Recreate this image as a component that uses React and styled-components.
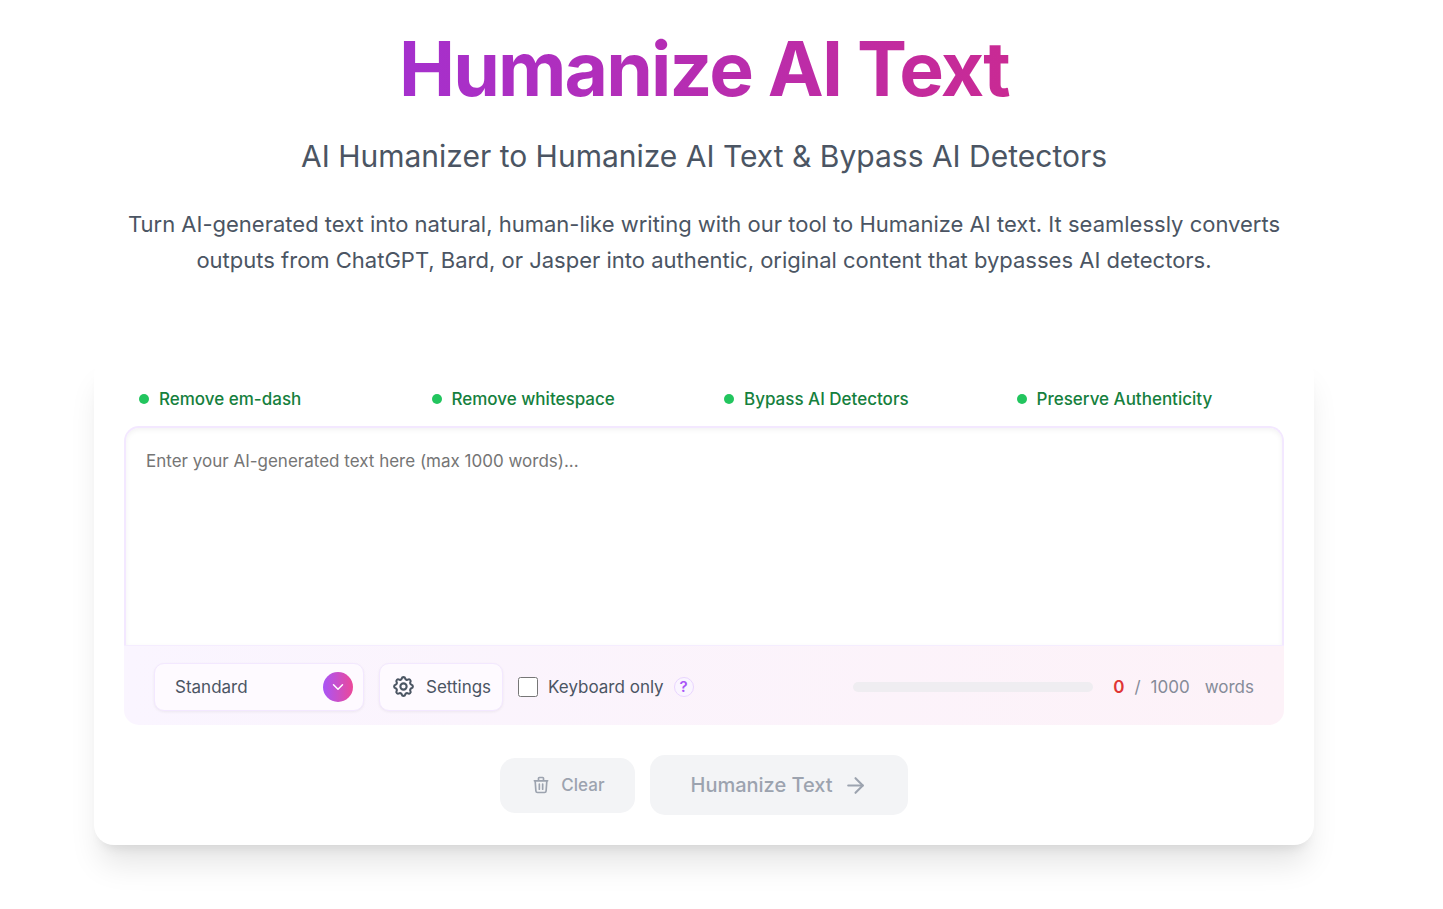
import React, { useState } from "react"
import styled, { createGlobalStyle } from "styled-components"
import { ArrowRight, ChevronDown } from "lucide-react"

const MAX_WORDS = 1000

const GlobalStyle = createGlobalStyle`
  * {
    box-sizing: border-box;
  }

  body {
    margin: 0;
    background: #fff;
    font-family: Inter, "Liberation Sans", sans-serif;
  }

  button, select, textarea, input {
    font-family: inherit;
  }
`;

const Page = styled.main`
  display: flex;
  flex-direction: column;
  align-items: center;
  padding: 31px 129px 64px 94px;
`;

const Title = styled.h1`
  margin: 0;
  background: linear-gradient(to right, #9333ea, #db2777);
  background-clip: text;
  color: transparent;
  width: 100%;
  text-align: center;
  font-size: 75px;
  font-weight: 700;
  line-height: 75px;
  letter-spacing: -0.025em;
`;

const Subtitle = styled.h2`
  margin: 30px 0;
  color: #4b5563;
  font-size: 30px;
  font-weight: 400;
  line-height: 40px;
`;

const Intro = styled.p`
  margin: 0;
  padding: 0 15px;
  color: #4b5563;
  font-size: 22px;
  line-height: 36px;
  text-align: center;
`;

const Card = styled.section`
  width: 100%;
  margin-top: 77px;
  padding: 30px;
  border-radius: 20px;
  background: #fff;
  box-shadow: 0 25px 31px -6px rgba(0, 0, 0, 0.1), 0 10px 12px -8px rgba(0, 0, 0, 0.1);
`;

const Features = styled.ul`
  display: grid;
  grid-template-columns: repeat(4, 1fr);
  gap: 25px;
  margin: 0;
  padding: 0 0 13px 15px;
  list-style: none;
`;

const Feature = styled.li`
  display: flex;
  align-items: center;
  gap: 10px;
  color: #15803d;
  font-size: 17px;
  font-weight: 500;
  line-height: 28px;

  &::before {
    content: "";
    width: 10px;
    height: 10px;
    border-radius: 50%;
    background: #22c55e;
  }
`;

const TextInput = styled.textarea`
  display: block;
  width: 100%;
  height: 219px;
  padding: 20px;
  border: 2px solid #f3e8ff;
  border-bottom: none;
  border-radius: 15px 15px 0 0;
  outline: none;
  resize: none;
  background: #fff;
  box-shadow: inset 0 2px 5px rgba(0, 0, 0, 0.05);
  color: #1f2937;
  font-size: 17px;
  line-height: 26px;

  &::placeholder {
    color: #757575;
  }
`;

const Toolbar = styled.div`
  display: flex;
  align-items: center;
  justify-content: space-between;
  height: 80px;
  padding: 2px 30px 0;
  border-top: 1px solid #f5edff;
  border-radius: 0 0 15px 15px;
  background: linear-gradient(to right, #faf5ff, #fdf2f8);
`;

const Group = styled.div`
  display: flex;
  align-items: center;
  gap: ${props => props.$gap}px;
`;

const ModeBox = styled.div`
  position: relative;
`;

const ModeSelect = styled.select`
  display: block;
  width: 210px;
  height: 48px;
  padding: 0 50px 0 20px;
  appearance: none;
  border: 1px solid #f3e8ff;
  border-radius: 10px;
  background: #fefaff;
  box-shadow: 0 1px 3px rgba(0, 0, 0, 0.06);
  color: #4b5563;
  font-size: 17px;
`;

const ModeArrow = styled.span`
  position: absolute;
  top: 9px;
  right: 11px;
  display: grid;
  place-items: center;
  width: 30px;
  height: 30px;
  border-radius: 50%;
  background: linear-gradient(to right, #a855f7, #ec4899);
  color: #fff;
  pointer-events: none;
`;

const SettingsButton = styled.button`
  display: flex;
  align-items: center;
  gap: 10px;
  height: 48px;
  padding: 0 11px;
  border: 1px solid #f3e8ff;
  border-radius: 10px;
  background: #fefaff;
  box-shadow: 0 1px 3px rgba(0, 0, 0, 0.06);
  color: #4b5563;
  font-size: 17px;
`;

const CheckLabel = styled.label`
  display: flex;
  align-items: center;
  gap: 10px;
  color: #4b5563;
  font-size: 17px;

  input {
    width: 20px;
    height: 20px;
    margin: 0;
  }
`;

const HelpButton = styled.button`
  width: 20px;
  height: 20px;
  padding: 0;
  border: 1px solid #e9d5ff;
  border-radius: 50%;
  background: #faf5ff;
  color: #a855f7;
  font-size: 15px;
  font-weight: 600;
  line-height: 18px;
`;

const Track = styled.div`
  width: 240px;
  height: 10px;
  border-radius: 5px;
  background: #efedf1;
  overflow: hidden;
`;

const Fill = styled.div`
  height: 100%;
  background: linear-gradient(to right, #a855f7, #ec4899);
`;

const Counter = styled.div`
  display: flex;
  gap: 10px;
  color: #858b98;
  font-size: 17px;

  strong {
    color: #e03535;
    font-weight: 600;
  }

  span:last-child {
    margin-left: 5px;
  }
`;

const Actions = styled.div`
  display: flex;
  align-items: center;
  justify-content: center;
  gap: 15px;
  margin-top: 30px;
`;

const Button = styled.button`
  display: flex;
  align-items: center;
  gap: 10px;
  height: 55px;
  padding: 0 31px;
  border: none;
  border-radius: 15px;
  background: #f3f4f6;
  color: #9ca3af;
  font-size: 17px;
  font-weight: 500;
`;

const PrimaryButton = styled(Button)`
  height: 60px;
  padding: 0 40px;
  font-size: 20px;
`;

const GearIcon = () => (
  <svg width="25" height="25" viewBox="0 0 24 24" fill="none" stroke="currentColor" strokeWidth="2" strokeLinecap="round" strokeLinejoin="round" aria-hidden="true">
    <path d="M10.325 4.317c.426-1.756 2.924-1.756 3.35 0a1.724 1.724 0 002.573 1.066c1.543-.94 3.31.826 2.37 2.37a1.724 1.724 0 001.065 2.572c1.756.426 1.756 2.924 0 3.35a1.724 1.724 0 00-1.066 2.573c.94 1.543-.826 3.31-2.37 2.37a1.724 1.724 0 00-2.572 1.065c-.426 1.756-2.924 1.756-3.35 0a1.724 1.724 0 00-2.573-1.066c-1.543.94-3.31-.826-2.37-2.37a1.724 1.724 0 00-1.065-2.572c-1.756-.426-1.756-2.924 0-3.35a1.724 1.724 0 001.066-2.573c-.94-1.543.826-3.31 2.37-2.37.996.608 2.296.07 2.572-1.065z" />
    <circle cx="12" cy="12" r="3" />
  </svg>
)

const TrashIcon = () => (
  <svg width="20" height="20" viewBox="0 0 24 24" fill="none" stroke="currentColor" strokeWidth="2" strokeLinecap="round" strokeLinejoin="round" aria-hidden="true">
    <path d="M19 7l-.867 12.142A2 2 0 0116.138 21H7.862a2 2 0 01-1.995-1.858L5 7m5 4v6m4-6v6m1-10V4a1 1 0 00-1-1h-4a1 1 0 00-1 1v3M4 7h16" />
  </svg>
)

const features = [
  "Remove em-dash",
  "Remove whitespace",
  "Bypass AI Detectors",
  "Preserve Authenticity",
]

export default function App() {
  const [text, setText] = useState("")
  const words = text.split(/\s+/).filter(Boolean).length

  return (
    <>
      <GlobalStyle />
      <Page>
        <Title>Humanize AI Text</Title>
        <Subtitle>AI Humanizer to Humanize AI Text &amp; Bypass AI Detectors</Subtitle>
        <Intro>
          Turn AI-generated text into natural, human-like writing with our tool to Humanize AI text. It seamlessly converts
          outputs from ChatGPT, Bard, or Jasper into authentic, original content that bypasses AI detectors.
        </Intro>

        <Card>
          <Features>
            {features.map(name => <Feature key={name}>{name}</Feature>)}
          </Features>

          <TextInput
            aria-label="Text to humanize"
            placeholder="Enter your AI-generated text here (max 1000 words)..."
            value={text}
            onChange={e => setText(e.target.value)}
          />

          <Toolbar>
            <Group $gap={15}>
              <ModeBox>
                <ModeSelect aria-label="Mode">
                  <option>Standard</option>
                </ModeSelect>
                <ModeArrow><ChevronDown size={18} /></ModeArrow>
              </ModeBox>
              <SettingsButton type="button"><GearIcon />Settings</SettingsButton>
              <Group $gap={10}>
                <CheckLabel><input type="checkbox" />Keyboard only</CheckLabel>
                <HelpButton type="button" aria-label="About keyboard only">?</HelpButton>
              </Group>
            </Group>

            <Group $gap={20}>
              <Track>
                <Fill style={{ width: `${Math.min(100, (words / MAX_WORDS) * 100)}%` }} />
              </Track>
              <Counter>
                <strong>{words}</strong>
                <span>/</span>
                <span>{MAX_WORDS}</span>
                <span>words</span>
              </Counter>
            </Group>
          </Toolbar>

          <Actions>
            <Button type="button" disabled={!words} onClick={() => setText("")}>
              <TrashIcon />Clear
            </Button>
            <PrimaryButton type="button" disabled={!words}>
              Humanize Text<ArrowRight size={25} />
            </PrimaryButton>
          </Actions>
        </Card>
      </Page>
    </>
  )
}
